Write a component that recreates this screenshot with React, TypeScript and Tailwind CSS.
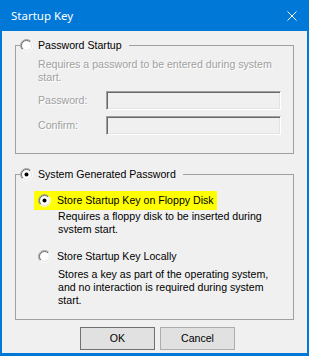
import type { ReactNode } from "react";

const font = "font-['Liberation_Sans',Arial,sans-serif] text-[10.6px] leading-[13px]";
const grey = "text-[#a0a0a0] [text-shadow:1px_1px_0_#ffffff]";

function Radio({ checked }: { checked?: boolean }) {
  return (
    <svg width="13" height="13" viewBox="0 0 13 13" className="shrink-0">
      <circle cx="6.5" cy="6.5" r="5" fill="#ffffff" />
      <path d="M2.257 10.743 A6 6 0 0 1 10.743 2.257" fill="none" stroke="#a0a0a0" />
      <path d="M10.743 2.257 A6 6 0 0 1 2.257 10.743" fill="none" stroke="#ffffff" />
      <path d="M2.964 10.036 A5 5 0 0 1 10.036 2.964" fill="none" stroke="#696969" />
      <path d="M10.036 2.964 A5 5 0 0 1 2.964 10.036" fill="none" stroke="#e3e3e3" />
      {checked ? <circle cx="6.5" cy="6.5" r="2" fill="#000000" /> : null}
    </svg>
  );
}

function Group({ title, checked, children }: { title: string; checked?: boolean; children: ReactNode }) {
  return (
    <fieldset className="mx-[13px] border border-[#a0a0a0] p-0">
      <legend className="ml-[4px] flex h-[13px] items-center gap-[5px] pr-[7px]">
        <Radio checked={checked} />
        <span className="whitespace-nowrap text-black">{title}</span>
      </legend>
      {children}
    </fieldset>
  );
}

function Field({ label, className }: { label: string; className?: string }) {
  return (
    <div className={`flex items-center ${className ?? ""}`}>
      <span className={`w-[68px] ${grey}`}>{label}</span>
      <div className="h-[19px] w-[175px] border border-t-[#a0a0a0] border-l-[#a0a0a0] border-r-white border-b-white bg-[#f0f0f0] shadow-[inset_1px_1px_0_#696969,inset_-1px_-1px_0_#e3e3e3]" />
    </div>
  );
}

export default function App() {
  return (
    <div className={`flex h-[356px] w-[309px] flex-col bg-[#0078d7] px-[2px] pb-[3px] ${font}`}>
      <div className="-mx-[2px] flex h-[31px] shrink-0 items-center justify-between pl-[11px] pr-[12px] text-white">
        <span className="font-['Noto_Sans',sans-serif] text-[11.5px]">Startup Key</span>
        <svg width="10" height="10" viewBox="0 0 10 10">
          <path d="M0.5 0.5 L9.5 9.5 M9.5 0.5 L0.5 9.5" stroke="#ffffff" strokeWidth="1" />
        </svg>
      </div>

      <div className="flex flex-1 flex-col bg-[#f0f0f0] pt-[8px]">
        <Group title="Password Startup">
          <div className="pb-[18px] pl-[22px] pt-[6px]">
            <p className={grey}>
              Requires a password to be entered during system
              <br />
              start.
            </p>
            <Field label="Password:" className="mt-[7px]" />
            <Field label="Confirm:" className="mt-[6px]" />
          </div>
        </Group>

        <div className="mt-[14px]">
          <Group title="System Generated Password" checked>
            <div className="pb-[12px] pl-[18px] pt-[10px]">
              <div className="flex h-[19px] w-[183px] items-center gap-[6px] bg-[#ffff00] pl-[4px]">
                <Radio checked />
                <span className="whitespace-nowrap">Store Startup Key on Floppy Disk</span>
              </div>
              <p className="h-[23px] overflow-hidden whitespace-nowrap pl-[24px]">
                Requires a floppy disk to be inserted during
                <br />
                system start.
              </p>
              <div className="mt-[17px] flex h-[13px] items-center gap-[6px] pl-[4px]">
                <Radio />
                <span className="whitespace-nowrap">Store Startup Key Locally</span>
              </div>
              <p className="mt-[5px] whitespace-nowrap pl-[24px]">
                Stores a key as part of the operating system,
                <br />
                and no interaction is required during system
                <br />
                start.
              </p>
            </div>
          </Group>
        </div>

        <div className="mt-[7px] flex gap-[5px] pl-[78px]">
          <button className="h-[23px] w-[75px] border border-[#707070] bg-[#e1e1e1] text-black">OK</button>
          <button className="h-[23px] w-[75px] border border-[#adadad] bg-[#e1e1e1] text-black">Cancel</button>
        </div>
      </div>
    </div>
  );
}
